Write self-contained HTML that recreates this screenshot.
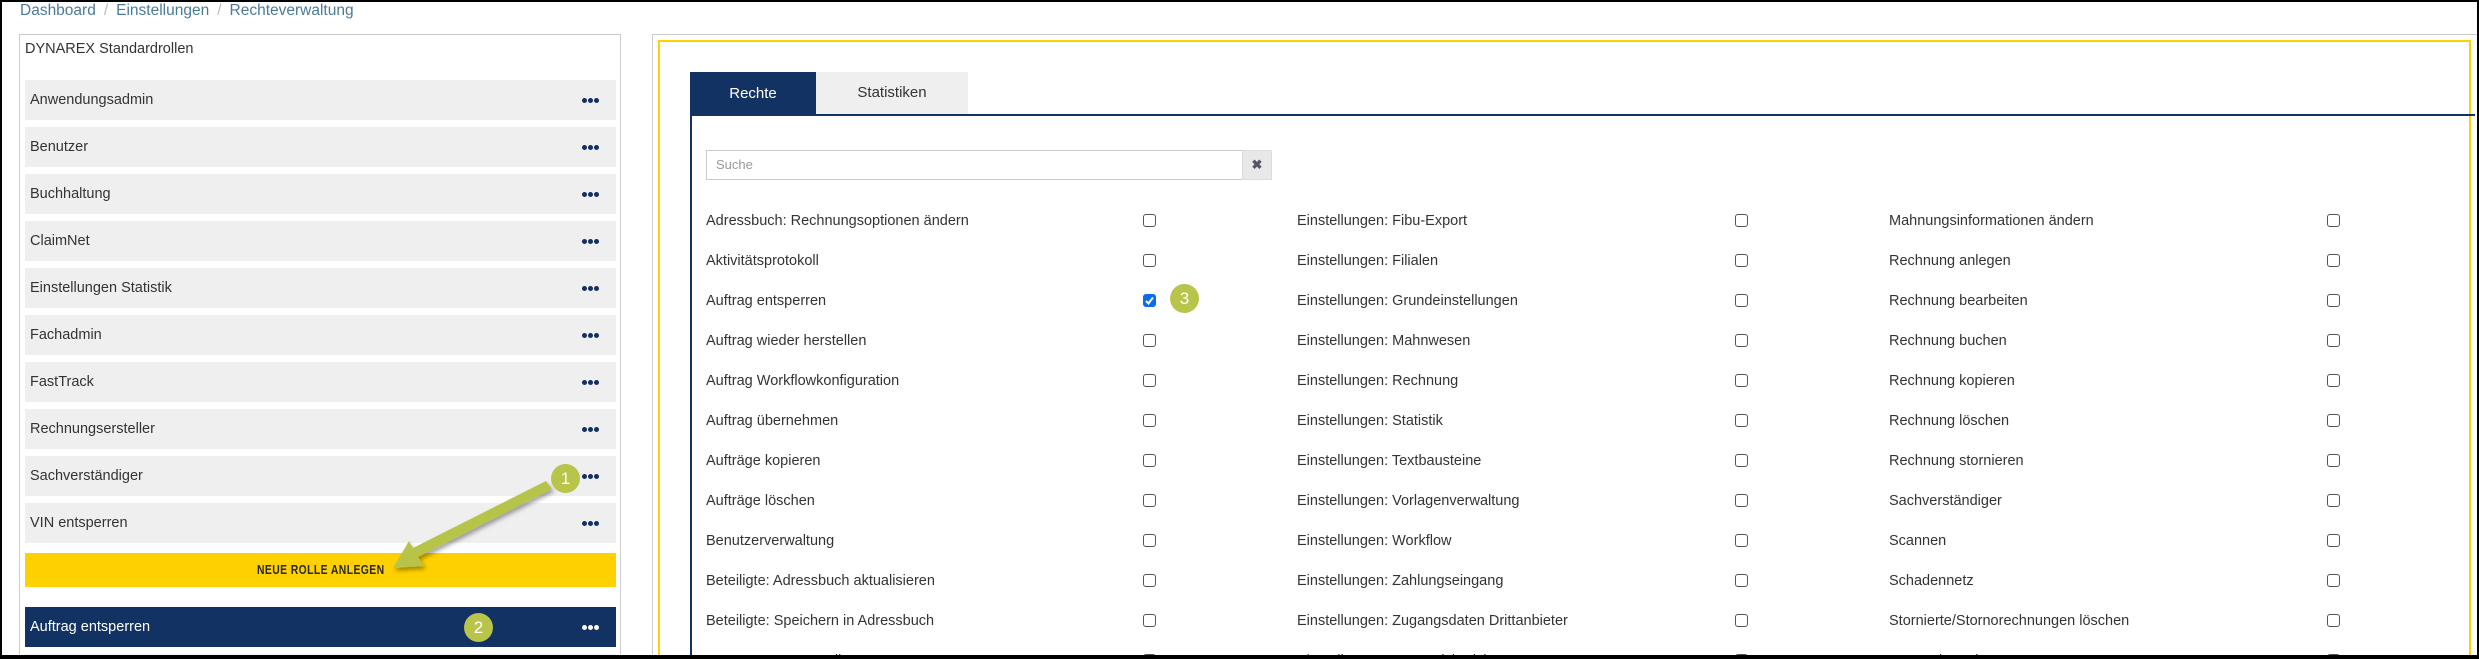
<!DOCTYPE html>
<html><head><meta charset="utf-8"><style>
*{margin:0;padding:0;box-sizing:border-box}
html,body{width:2479px;height:659px;overflow:hidden;background:#fff}
body{position:relative;font-family:"Liberation Sans",sans-serif;color:#333;font-size:15px}
.frame{position:absolute;left:0;top:0;width:2479px;height:659px;border:2px solid #000;border-bottom:4px solid #000;z-index:50;pointer-events:none}
.a{position:absolute}
.bc{left:20px;top:2px;font-size:15.5px;color:#4b7a99}
.bc span{color:#bbb;margin:0 8px}
.lp{left:19px;top:34px;width:602px;height:625px;border:1px solid #ccc;border-bottom:none}
.row{position:absolute;left:25px;width:591px;height:40px;background:#efefef;line-height:40px;padding-left:5px;font-size:14.5px;color:#333;overflow:hidden}
.dots{position:absolute;right:17px;top:18px;width:17px;height:5px}
.dots i{position:absolute;top:0;width:5px;height:5px;border-radius:50%;background:#13305f}
.sel{background:#123263;color:#fff}
.sel .dots i{background:#fff}
.btn{left:25px;top:553px;width:591px;height:34px;background:#ffd100;text-align:center;line-height:34px;font-size:13px;font-weight:bold;letter-spacing:0.5px;color:#2a2a2a}
.btn span{display:inline-block;transform:scaleX(0.8)}
.circ{position:absolute;width:29px;height:29px;border-radius:50%;background:#b8c44a;color:#fff;text-align:center;line-height:29px;font-size:17px;z-index:10}
.rp{left:652px;top:34px;width:1830px;height:625px;border:1px solid #ccc;border-bottom:none}
.yb{left:658px;top:40px;width:1813px;height:619px;border:2px solid #ffd100;border-bottom:none}
.tab1{left:690px;top:72px;width:126px;height:43px;background:#123263;color:#fff;text-align:center;line-height:43px;font-size:15px}
.tab2{left:816px;top:72px;width:152px;height:42px;background:#efefef;color:#333;text-align:center;line-height:42px;font-size:15px}
.tline{left:690px;top:114px;width:1785px;height:2px;background:#123263}
.vline{left:690px;top:114px;width:2px;height:545px;background:#123263}
.srch{left:706px;top:150px;width:537px;height:30px;border:1px solid #ccc;color:#999;font-size:13px;line-height:28px;padding-left:9px}
.clr{left:1242px;top:150px;width:30px;height:30px;background:#e8e8e8;border:1px solid #ddd;text-align:center;line-height:28px;font-size:13px;color:#556;font-weight:bold}
.it{position:absolute;font-size:14.5px;color:#333;line-height:20px;white-space:nowrap}
.cb{position:absolute;width:13px;height:13px;border:1px solid #555;border-radius:3px;background:#fff}
.cb.on{background:#0b6cf0;border-color:#0b6cf0}
</style></head><body>
<div class="a bc">Dashboard<span>/</span>Einstellungen<span>/</span>Rechteverwaltung</div>
<div class="a lp"></div>
<div class="a" style="left:25px;top:41px;font-size:14.5px;color:#333">DYNAREX Standardrollen</div>

<div class="row" style="top:80px">Anwendungsadmin<div class="dots"><i style="left:0"></i><i style="left:6px"></i><i style="left:12px"></i></div></div>
<div class="row" style="top:127px">Benutzer<div class="dots"><i style="left:0"></i><i style="left:6px"></i><i style="left:12px"></i></div></div>
<div class="row" style="top:174px">Buchhaltung<div class="dots"><i style="left:0"></i><i style="left:6px"></i><i style="left:12px"></i></div></div>
<div class="row" style="top:221px">ClaimNet<div class="dots"><i style="left:0"></i><i style="left:6px"></i><i style="left:12px"></i></div></div>
<div class="row" style="top:268px">Einstellungen Statistik<div class="dots"><i style="left:0"></i><i style="left:6px"></i><i style="left:12px"></i></div></div>
<div class="row" style="top:315px">Fachadmin<div class="dots"><i style="left:0"></i><i style="left:6px"></i><i style="left:12px"></i></div></div>
<div class="row" style="top:362px">FastTrack<div class="dots"><i style="left:0"></i><i style="left:6px"></i><i style="left:12px"></i></div></div>
<div class="row" style="top:409px">Rechnungsersteller<div class="dots"><i style="left:0"></i><i style="left:6px"></i><i style="left:12px"></i></div></div>
<div class="row" style="top:456px">Sachverständiger<div class="dots"><i style="left:0"></i><i style="left:6px"></i><i style="left:12px"></i></div></div>
<div class="row" style="top:503px">VIN entsperren<div class="dots"><i style="left:0"></i><i style="left:6px"></i><i style="left:12px"></i></div></div>
<div class="a btn"><span>NEUE ROLLE ANLEGEN</span></div>
<div class="row sel" style="top:607px">Auftrag entsperren<div class="dots"><i style="left:0"></i><i style="left:6px"></i><i style="left:12px"></i></div></div>
<div class="row" style="top:654px;height:5px"></div>

<svg class="a" style="left:0;top:0;z-index:9" width="700" height="659">
<defs><filter id="s" x="-20%" y="-20%" width="140%" height="140%"><feDropShadow dx="2" dy="3" stdDeviation="2" flood-color="#000" flood-opacity="0.35"/></filter></defs>
<g filter="url(#s)" fill="#b8c44a">
<polygon points="546,481 552,489 418,557 424,566 393,568 409,541 413,548"/>
</g>
</svg>
<div class="circ" style="left:551px;top:464px">1</div>
<div class="circ" style="left:464px;top:613px">2</div>

<div class="a rp"></div>
<div class="a yb"></div>
<div class="a tab1">Rechte</div>
<div class="a tab2">Statistiken</div>
<div class="a tline"></div>
<div class="a vline"></div>
<div class="a srch">Suche</div>
<div class="a clr">✖</div>
<div class="circ" style="left:1170px;top:284px">3</div>

<div id="items"></div>
<script>
var c1=["Adressbuch: Rechnungsoptionen ändern","Aktivitätsprotokoll","Auftrag entsperren","Auftrag wieder herstellen","Auftrag Workflowkonfiguration","Auftrag übernehmen","Aufträge kopieren","Aufträge löschen","Benutzerverwaltung","Beteiligte: Adressbuch aktualisieren","Beteiligte: Speichern in Adressbuch","Gesamtes GV Erstellen"];
var c2=["Einstellungen: Fibu-Export","Einstellungen: Filialen","Einstellungen: Grundeinstellungen","Einstellungen: Mahnwesen","Einstellungen: Rechnung","Einstellungen: Statistik","Einstellungen: Textbausteine","Einstellungen: Vorlagenverwaltung","Einstellungen: Workflow","Einstellungen: Zahlungseingang","Einstellungen: Zugangsdaten Drittanbieter","Einstellungen: Zustandsbericht"];
var c3=["Mahnungsinformationen ändern","Rechnung anlegen","Rechnung bearbeiten","Rechnung buchen","Rechnung kopieren","Rechnung löschen","Rechnung stornieren","Sachverständiger","Scannen","Schadennetz","Stornierte/Stornorechnungen löschen","Sammelzuordnung"];
var h="";
function col(a,x,cx,chk){a.forEach(function(t,i){var y=220+40*i;h+='<div class="it" style="left:'+x+'px;top:'+(y-9)+'px">'+t+'</div><div class="cb'+(chk&&i==2?' on':'')+'" style="left:'+(cx-6)+'px;top:'+(y-6)+'px">'+(chk&&i==2?'<svg width="11" height="11" style="position:absolute;left:0;top:0"><path d="M2 6 L4.5 8.5 L9 2.5" stroke="#fff" stroke-width="2" fill="none"/></svg>':'')+'</div>';});}
col(c1,706,1149,true);col(c2,1297,1741,false);col(c3,1889,2333,false);
document.getElementById("items").innerHTML=h;
</script>
<div class="frame"></div>
</body></html>
